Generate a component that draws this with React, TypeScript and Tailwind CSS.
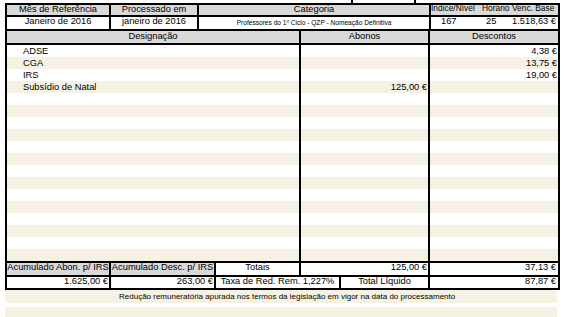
import React from "react";

const rows: { d: string; a: string; s: string }[] = [
  { d: "ADSE", a: "", s: "4,38 €" },
  { d: "CGA", a: "", s: "13,75 €" },
  { d: "IRS", a: "", s: "19,00 €" },
  { d: "Subsídio de Natal", a: "125,00 €", s: "" },
  ...Array.from({ length: 14 }, () => ({ d: "", a: "", s: "" })),
];

export default function App() {
  return (
    <div className="w-[565px] h-[317px] overflow-hidden bg-white text-black text-[9.3px] font-['Liberation_Sans',Arial,sans-serif] whitespace-nowrap">
      {/* remnants of the row above */}
      <div className="flex h-[3px]">
        <div className="w-[351px]" />
        <div className="w-[65px] border-x-2 border-black" />
      </div>

      <div className="ml-[5px] w-[555px] border-2 border-black">
        {/* Row 1 - headers */}
        <div className="flex h-[12px] border-b-2 border-black bg-[#d9d9d9] leading-[9px]">
          <div className="w-[104px] border-r-2 border-black flex justify-center">Mês de Referência</div>
          <div className="w-[88px] border-r-2 border-black flex justify-center">Processado em</div>
          <div className="w-[232px] border-r-2 border-black flex justify-center">Categoria</div>
          <div className="w-[127px] flex text-[8.4px] leading-[6px]">
            <div className="w-[51px]">Indice/Nível</div>
            <div className="w-[30px]">Horário</div>
            <div className="w-[46px]">Venc. Base</div>
          </div>
        </div>

        {/* Row 2 - values */}
        <div className="flex h-[14px] border-b-2 border-black leading-[9px]">
          <div className="w-[104px] border-r-2 border-black flex justify-center">Janeiro de 2016</div>
          <div className="w-[88px] border-r-2 border-black flex justify-center">janeiro de 2016</div>
          <div className="w-[232px] border-r-2 border-black flex justify-center text-[6.6px] leading-[12px]">
            Professores do 1º Ciclo - QZP - Nomeação Definitiva
          </div>
          <div className="w-[127px] flex">
            <div className="w-[49px] pl-[10px]">167</div>
            <div className="w-[30px] pl-[6px]">25</div>
            <div className="w-[48px] pr-[2px] text-right">1.518,63 €</div>
          </div>
        </div>

        {/* Designação header */}
        <div className="flex h-[14px] border-b-2 border-black bg-[#d9d9d9] leading-[11px]">
          <div className="w-[294px] border-r-2 border-black flex justify-center">Designação</div>
          <div className="w-[129px] border-r-2 border-black flex justify-center">Abonos</div>
          <div className="w-[128px] flex justify-center">Descontos</div>
        </div>

        {/* Data rows */}
        <div className="border-b-2 border-black">
          {rows.map((r, i) => (
            <div
              key={i}
              className={`flex h-[12px] leading-[13px] ${i % 2 === 1 ? "bg-[#f5f2e3]" : "bg-white"}`}
            >
              <div className="w-[294px] border-r-2 border-black pl-[16px]">{r.d}</div>
              <div className="w-[129px] border-r-2 border-black pr-[1px] text-right">{r.a}</div>
              <div className="w-[128px] pr-[1px] text-right">{r.s}</div>
            </div>
          ))}
        </div>

        {/* Row A */}
        <div className="flex h-[14px] border-b-2 border-black leading-[9px]">
          <div className="w-[104px] border-r-2 border-black bg-[#d9d9d9] flex justify-center">Acumulado Abon. p/ IRS</div>
          <div className="w-[105px] border-r-2 border-black bg-[#d9d9d9] flex justify-center">Acumulado Desc. p/ IRS</div>
          <div className="w-[85px] border-r-2 border-black flex justify-center">Totais</div>
          <div className="w-[129px] border-r-2 border-black pr-[1px] text-right">125,00 €</div>
          <div className="w-[128px] pr-[2px] text-right">37,13 €</div>
        </div>

        {/* Row B */}
        <div className="flex h-[11px] leading-[9px]">
          <div className="w-[104px] border-r-2 border-black pr-[1px] text-right">1.625,00 €</div>
          <div className="w-[105px] border-r-2 border-black pr-[1px] text-right">263,00 €</div>
          <div className="w-[125px] border-r-2 border-black flex justify-center">Taxa de Red. Rem. 1,227%</div>
          <div className="w-[89px] border-r-2 border-black flex justify-center">Total Líquido</div>
          <div className="w-[128px] pr-[2px] text-right">87,87 €</div>
        </div>
      </div>

      {/* Footer */}
      <div className="ml-[5px] w-[552px]">
        <div className="h-[13px] bg-[#f5f2e3] pl-[114px] text-[8px] leading-[13px]">
          Redução remuneratória apurada nos termos da legislação em vigor na data do processamento
        </div>
        <div className="h-[4px] bg-white" />
        <div className="h-[10px] bg-[#f5f2e3]" />
      </div>
    </div>
  );
}
